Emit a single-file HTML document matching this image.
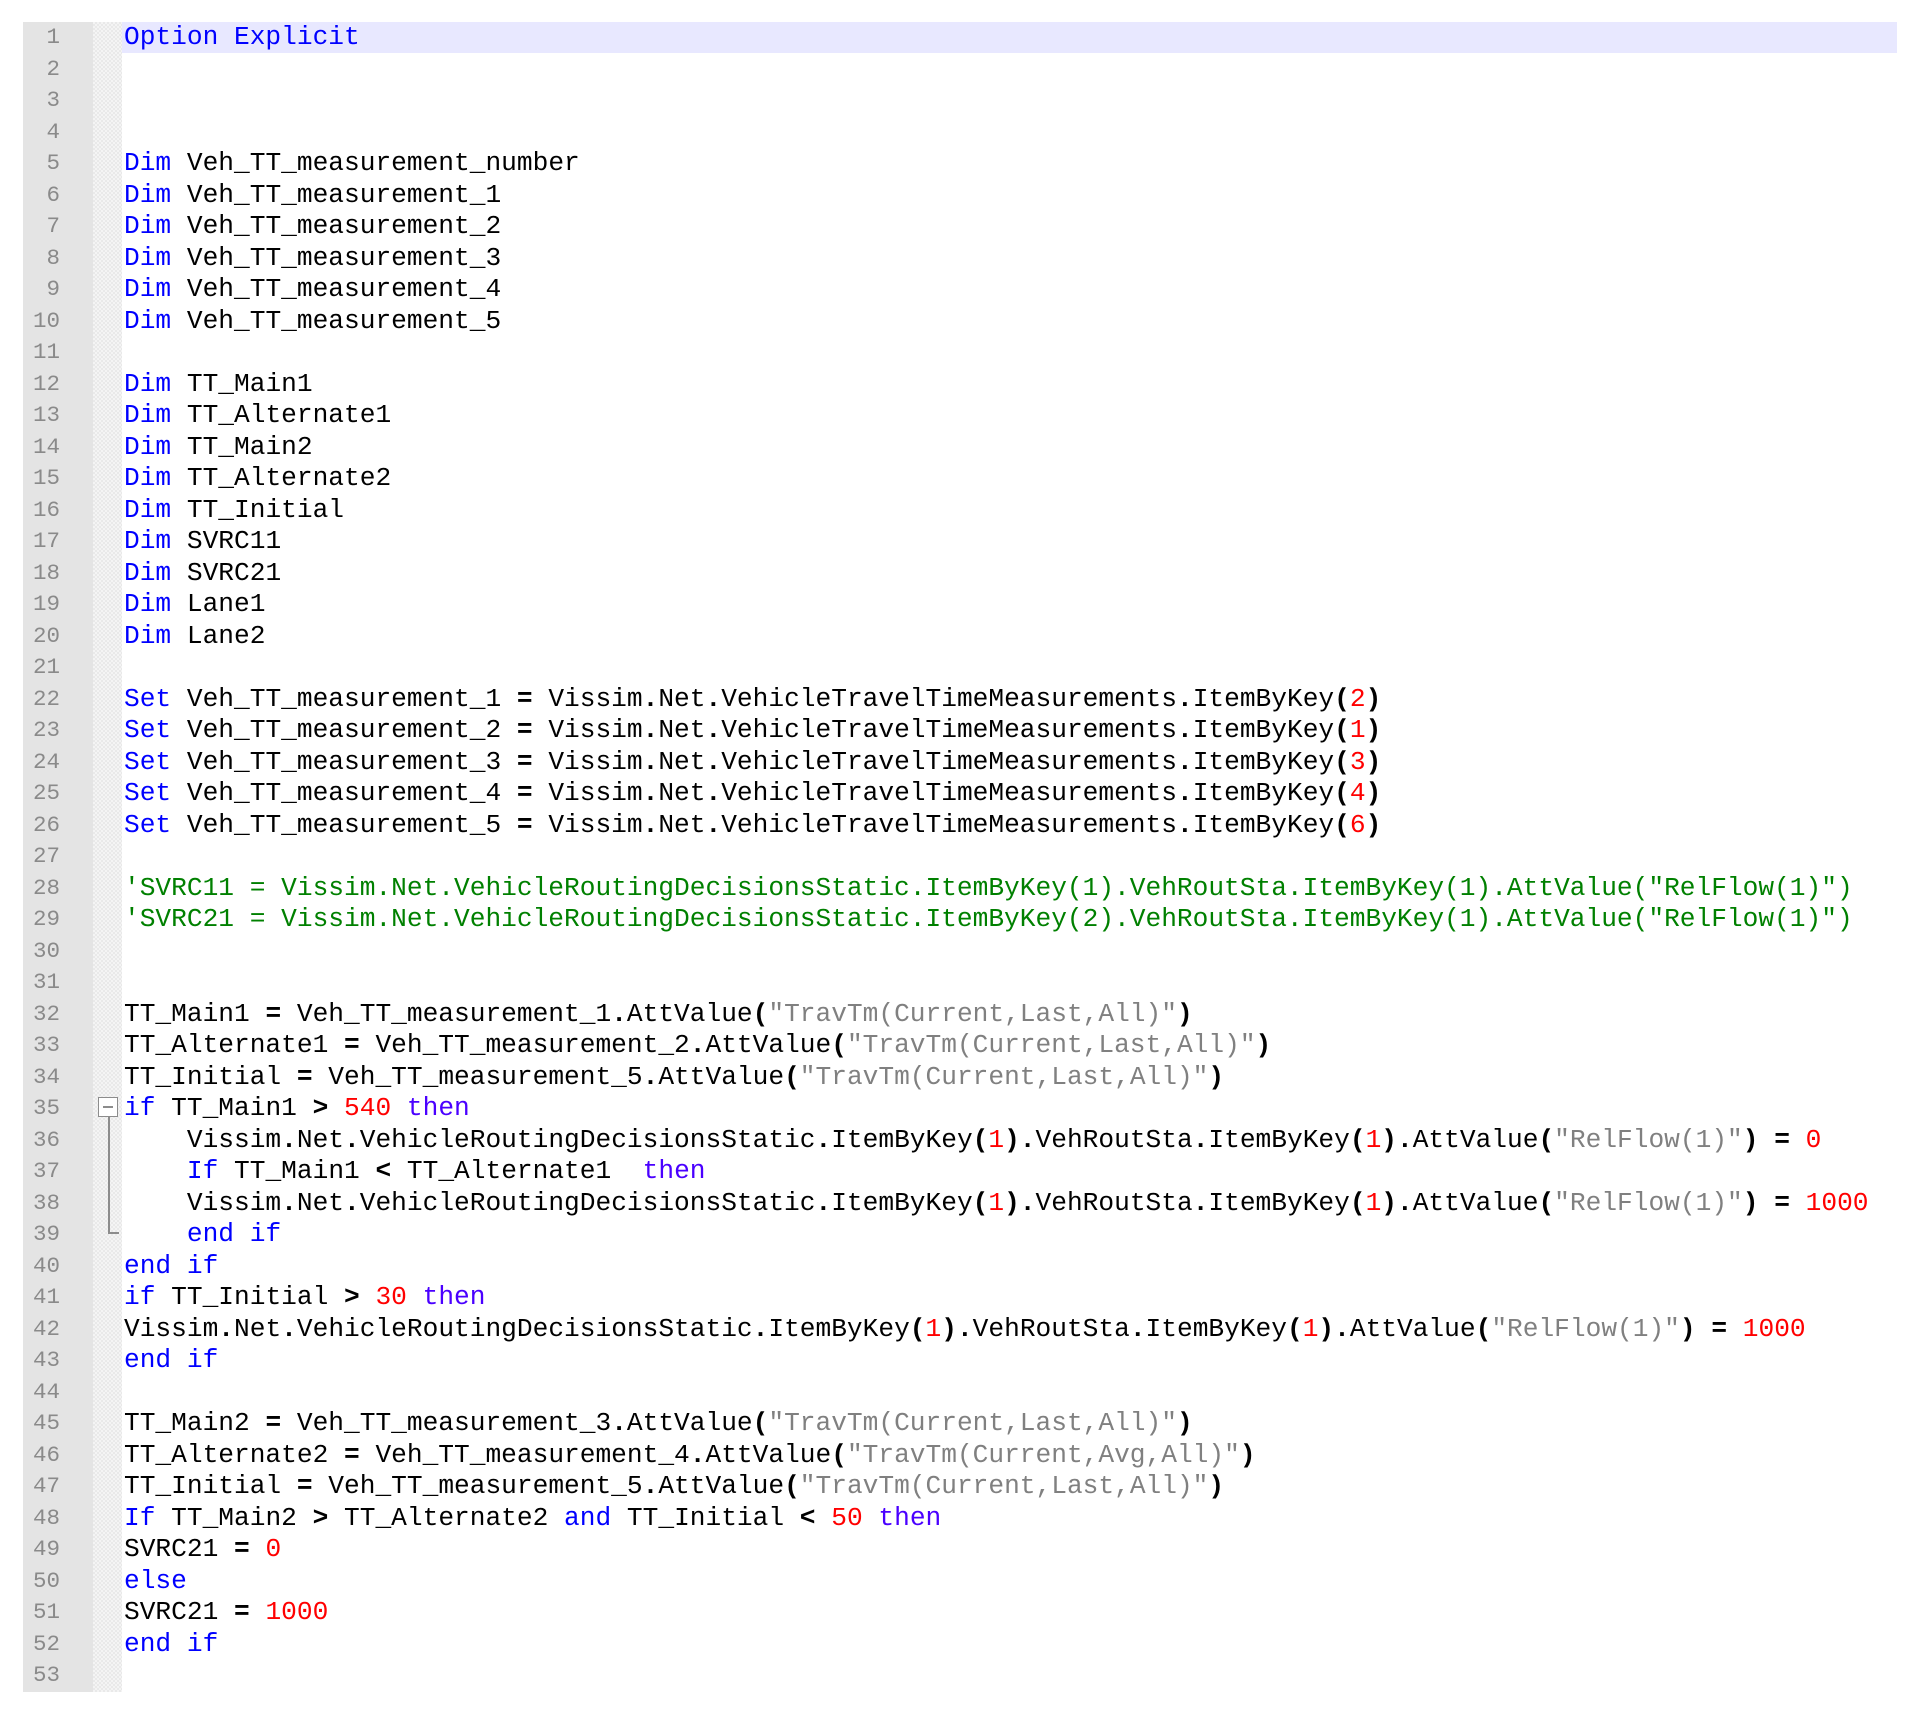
<!DOCTYPE html>
<html><head><meta charset="utf-8"><style>
html,body{margin:0;padding:0;background:#fff;width:1915px;height:1713px;overflow:hidden}
#gut{position:absolute;left:23px;top:22px;width:70px;height:1670px;background:#e4e4e4}
#fold{position:absolute;left:93px;top:22px;width:29px;height:1670px;background-color:#f4f4f4;
background-image:linear-gradient(45deg,#e9e9e9 25%,transparent 25%,transparent 75%,#e9e9e9 75%),linear-gradient(45deg,#e9e9e9 25%,transparent 25%,transparent 75%,#e9e9e9 75%);background-size:4px 4px;background-position:0 0,2px 2px}
#hl{position:absolute;left:122px;top:22px;width:1775px;height:31px;background:#e8e8ff}
.nums{position:absolute;left:23px;top:22px;width:37px;text-align:right;font:22.5px/31.5px "Liberation Mono",monospace;color:#8a8a8a}
.code{position:absolute;left:124px;top:22px;font:26.2px/31.5px "Liberation Mono",monospace;color:#000;white-space:pre}
.k{color:#0000ff}.t{color:#4a00ff}.n{color:#ff0000}.s{color:#808080}.c{color:#008000}.o{font-weight:bold}
#box{position:absolute;left:98px;top:1097px;width:18px;height:18px;border:1.5px solid #8c8c8c;background:#fff}
#box:after{content:"";position:absolute;left:4px;top:8px;width:10px;height:2px;background:#8c8c8c}
#vl{position:absolute;left:108px;top:1117px;width:2px;height:116px;background:#8c8c8c}
#hl2{position:absolute;left:108px;top:1232px;width:11px;height:2px;background:#8c8c8c}
</style></head><body>
<div id="gut"></div><div id="fold"></div><div id="hl"></div>
<div id="box"></div><div id="vl"></div><div id="hl2"></div>
<div class="nums">1<br>2<br>3<br>4<br>5<br>6<br>7<br>8<br>9<br>10<br>11<br>12<br>13<br>14<br>15<br>16<br>17<br>18<br>19<br>20<br>21<br>22<br>23<br>24<br>25<br>26<br>27<br>28<br>29<br>30<br>31<br>32<br>33<br>34<br>35<br>36<br>37<br>38<br>39<br>40<br>41<br>42<br>43<br>44<br>45<br>46<br>47<br>48<br>49<br>50<br>51<br>52<br>53</div>
<div class="code"><span class="k">Option Explicit</span>



<span class="k">Dim</span> Veh_TT_measurement_number
<span class="k">Dim</span> Veh_TT_measurement_1
<span class="k">Dim</span> Veh_TT_measurement_2
<span class="k">Dim</span> Veh_TT_measurement_3
<span class="k">Dim</span> Veh_TT_measurement_4
<span class="k">Dim</span> Veh_TT_measurement_5

<span class="k">Dim</span> TT_Main1
<span class="k">Dim</span> TT_Alternate1
<span class="k">Dim</span> TT_Main2
<span class="k">Dim</span> TT_Alternate2
<span class="k">Dim</span> TT_Initial
<span class="k">Dim</span> SVRC11
<span class="k">Dim</span> SVRC21
<span class="k">Dim</span> Lane1
<span class="k">Dim</span> Lane2

<span class="k">Set</span> Veh_TT_measurement_1 <span class="o">=</span> Vissim<span class="o">.</span>Net<span class="o">.</span>VehicleTravelTimeMeasurements<span class="o">.</span>ItemByKey<span class="o">(</span><span class="n">2</span><span class="o">)</span>
<span class="k">Set</span> Veh_TT_measurement_2 <span class="o">=</span> Vissim<span class="o">.</span>Net<span class="o">.</span>VehicleTravelTimeMeasurements<span class="o">.</span>ItemByKey<span class="o">(</span><span class="n">1</span><span class="o">)</span>
<span class="k">Set</span> Veh_TT_measurement_3 <span class="o">=</span> Vissim<span class="o">.</span>Net<span class="o">.</span>VehicleTravelTimeMeasurements<span class="o">.</span>ItemByKey<span class="o">(</span><span class="n">3</span><span class="o">)</span>
<span class="k">Set</span> Veh_TT_measurement_4 <span class="o">=</span> Vissim<span class="o">.</span>Net<span class="o">.</span>VehicleTravelTimeMeasurements<span class="o">.</span>ItemByKey<span class="o">(</span><span class="n">4</span><span class="o">)</span>
<span class="k">Set</span> Veh_TT_measurement_5 <span class="o">=</span> Vissim<span class="o">.</span>Net<span class="o">.</span>VehicleTravelTimeMeasurements<span class="o">.</span>ItemByKey<span class="o">(</span><span class="n">6</span><span class="o">)</span>

<span class="c">'SVRC11 = Vissim.Net.VehicleRoutingDecisionsStatic.ItemByKey(1).VehRoutSta.ItemByKey(1).AttValue("RelFlow(1)")</span>
<span class="c">'SVRC21 = Vissim.Net.VehicleRoutingDecisionsStatic.ItemByKey(2).VehRoutSta.ItemByKey(1).AttValue("RelFlow(1)")</span>


TT_Main1 <span class="o">=</span> Veh_TT_measurement_1<span class="o">.</span>AttValue<span class="o">(</span><span class="s">"TravTm(Current,Last,All)"</span><span class="o">)</span>
TT_Alternate1 <span class="o">=</span> Veh_TT_measurement_2<span class="o">.</span>AttValue<span class="o">(</span><span class="s">"TravTm(Current,Last,All)"</span><span class="o">)</span>
TT_Initial <span class="o">=</span> Veh_TT_measurement_5<span class="o">.</span>AttValue<span class="o">(</span><span class="s">"TravTm(Current,Last,All)"</span><span class="o">)</span>
<span class="k">if</span> TT_Main1 <span class="o">&gt;</span> <span class="n">540</span> <span class="t">then</span>
    Vissim<span class="o">.</span>Net<span class="o">.</span>VehicleRoutingDecisionsStatic<span class="o">.</span>ItemByKey<span class="o">(</span><span class="n">1</span><span class="o">).</span>VehRoutSta<span class="o">.</span>ItemByKey<span class="o">(</span><span class="n">1</span><span class="o">).</span>AttValue<span class="o">(</span><span class="s">"RelFlow(1)"</span><span class="o">)</span> <span class="o">=</span> <span class="n">0</span>
    <span class="k">If</span> TT_Main1 <span class="o">&lt;</span> TT_Alternate1  <span class="t">then</span>
    Vissim<span class="o">.</span>Net<span class="o">.</span>VehicleRoutingDecisionsStatic<span class="o">.</span>ItemByKey<span class="o">(</span><span class="n">1</span><span class="o">).</span>VehRoutSta<span class="o">.</span>ItemByKey<span class="o">(</span><span class="n">1</span><span class="o">).</span>AttValue<span class="o">(</span><span class="s">"RelFlow(1)"</span><span class="o">)</span> <span class="o">=</span> <span class="n">1000</span>
    <span class="k">end if</span>
<span class="k">end if</span>
<span class="k">if</span> TT_Initial <span class="o">&gt;</span> <span class="n">30</span> <span class="t">then</span>
Vissim<span class="o">.</span>Net<span class="o">.</span>VehicleRoutingDecisionsStatic<span class="o">.</span>ItemByKey<span class="o">(</span><span class="n">1</span><span class="o">).</span>VehRoutSta<span class="o">.</span>ItemByKey<span class="o">(</span><span class="n">1</span><span class="o">).</span>AttValue<span class="o">(</span><span class="s">"RelFlow(1)"</span><span class="o">)</span> <span class="o">=</span> <span class="n">1000</span>
<span class="k">end if</span>

TT_Main2 <span class="o">=</span> Veh_TT_measurement_3<span class="o">.</span>AttValue<span class="o">(</span><span class="s">"TravTm(Current,Last,All)"</span><span class="o">)</span>
TT_Alternate2 <span class="o">=</span> Veh_TT_measurement_4<span class="o">.</span>AttValue<span class="o">(</span><span class="s">"TravTm(Current,Avg,All)"</span><span class="o">)</span>
TT_Initial <span class="o">=</span> Veh_TT_measurement_5<span class="o">.</span>AttValue<span class="o">(</span><span class="s">"TravTm(Current,Last,All)"</span><span class="o">)</span>
<span class="k">If</span> TT_Main2 <span class="o">&gt;</span> TT_Alternate2 <span class="k">and</span> TT_Initial <span class="o">&lt;</span> <span class="n">50</span> <span class="t">then</span>
SVRC21 <span class="o">=</span> <span class="n">0</span>
<span class="k">else</span>
SVRC21 <span class="o">=</span> <span class="n">1000</span>
<span class="k">end if</span>
</div>
</body></html>
